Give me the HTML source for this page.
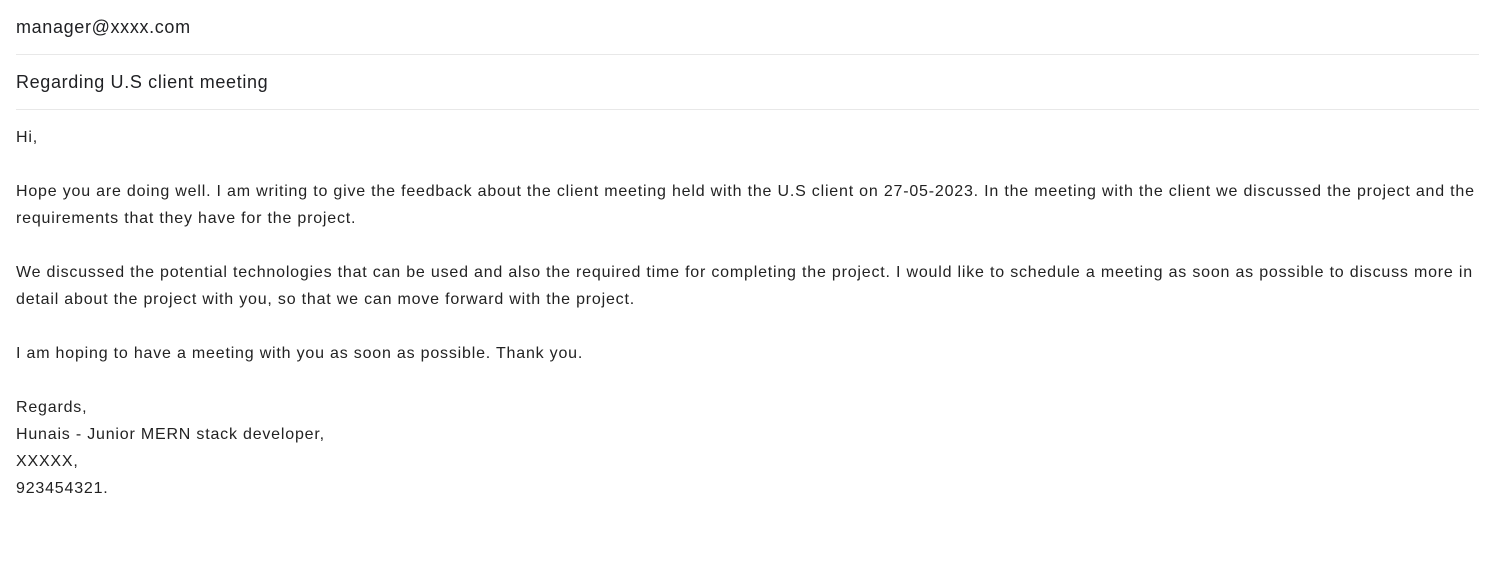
<!DOCTYPE html>
<html><head><style>
body{margin:0;background:#fff;font-family:"Liberation Sans",Arial,sans-serif;color:#222;}
.f{position:absolute;left:16px;right:14px;border-bottom:1px solid #e8e8e8;font-size:18px;color:#202124;letter-spacing:0.65px;}
.b{position:absolute;left:16px;top:124px;width:1470px;font-size:16px;line-height:27px;color:#222;letter-spacing:0.8px;}
p{margin:0 0 27px 0;}
</style></head><body>
<div class="f" style="top:17px;height:37px;">manager@xxxx.com</div>
<div class="f" style="top:72px;height:37px;">Regarding U.S client meeting</div>
<div class="b">
<p>Hi,</p>
<p>Hope you are doing well. I am writing to give the feedback about the client meeting held with the U.S client on 27-05-2023. In the meeting with the client we discussed the project and the requirements that they have for the project.</p>
<p>We discussed the potential technologies that can be used and also the required time for completing the project. I would like to schedule a meeting as soon as possible to discuss more in detail about the project with you, so that we can move forward with the project.</p>
<p>I am hoping to have a meeting with you as soon as possible. Thank you.</p>
<p>Regards,<br>Hunais - Junior MERN stack developer,<br>XXXXX,<br>923454321.</p>
</div>
</body></html>
